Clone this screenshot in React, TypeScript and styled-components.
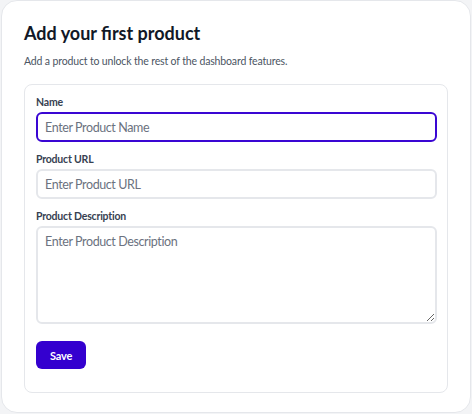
import React from "react";
import styled, { createGlobalStyle } from "styled-components";

const Global = createGlobalStyle`
  html, body { margin: 0; padding: 0; background: #f3f4f6; }
  body { font-family: Lato, "Noto Sans", sans-serif; }
  * { box-sizing: border-box; }
`;

const Page = styled.div`
  padding: 0 1px;
`;

const Card = styled.div`
  background: #ffffff;
  border: 1px solid #e5e7eb;
  border-radius: 16px;
  height: 413px;
  padding: 18px 22px 0 22px;
  display: flex;
  flex-direction: column;
`;

const Title = styled.h1`
  margin: 0;
  font-size: 18px;
  line-height: 28px;
  font-weight: 700;
  color: #111827;
`;

const Subtitle = styled.p`
  margin: 6px 0 0;
  font-size: 10.5px;
  letter-spacing: -0.15px;
  line-height: 16px;
  color: #4b5563;
`;

const FormCard = styled.form`
  margin-top: 15px;
  border: 1px solid #e5e7eb;
  border-radius: 8px;
  padding: 9px 10px 23px 11px;
  display: flex;
  flex-direction: column;
`;

const Field = styled.div<{ $first?: boolean }>`
  display: flex;
  flex-direction: column;
  gap: 2px;
  margin-top: ${(p) => (p.$first ? "0" : "9px")};
`;

const Label = styled.label`
  font-size: 10.5px;
  letter-spacing: -0.2px;
  line-height: 16px;
  font-weight: 700;
  color: #374151;
`;

const Input = styled.input<{ $focused?: boolean }>`
  height: 30px;
  width: 100%;
  border: ${(p) => (p.$focused ? "2px solid #3a06d3" : "2px solid #e5e7eb")};
  border-radius: 6px;
  padding: 0 7px;
  font-family: Lato, "Noto Sans", sans-serif;
  font-size: 12.5px;
  letter-spacing: -0.4px;
  color: #111827;
  outline: none;
  background: #fff;
  &::placeholder { color: #6b7280; }
`;

const TextArea = styled.textarea`
  height: 98px;
  width: 100%;
  border: 2px solid #e5e7eb;
  border-radius: 6px;
  padding: 4px 7px;
  font-family: Lato, "Noto Sans", sans-serif;
  font-size: 12.5px;
  letter-spacing: -0.4px;
  line-height: 20px;
  color: #111827;
  outline: none;
  resize: vertical;
  display: block;
  &::placeholder { color: #6b7280; }
`;

const SaveButton = styled.button`
  margin-top: 17px;
  align-self: flex-start;
  width: 50px;
  height: 28px;
  border: none;
  border-radius: 6px;
  background: #3400cf;
  color: #ffffff;
  font-family: Lato, "Noto Sans", sans-serif;
  font-size: 11px;
  letter-spacing: -0.2px;
  font-weight: 700;
  cursor: pointer;
`;

export default function App() {
  return (
    <Page>
      <Global />
      <Card>
        <Title>Add your first product</Title>
        <Subtitle>Add a product to unlock the rest of the dashboard features.</Subtitle>
        <FormCard onSubmit={(e) => e.preventDefault()}>
          <Field $first>
            <Label>Name</Label>
            <Input $focused placeholder="Enter Product Name" />
          </Field>
          <Field>
            <Label>Product URL</Label>
            <Input placeholder="Enter Product URL" />
          </Field>
          <Field>
            <Label>Product Description</Label>
            <TextArea placeholder="Enter Product Description" />
          </Field>
          <SaveButton type="submit">Save</SaveButton>
        </FormCard>
      </Card>
    </Page>
  );
}
